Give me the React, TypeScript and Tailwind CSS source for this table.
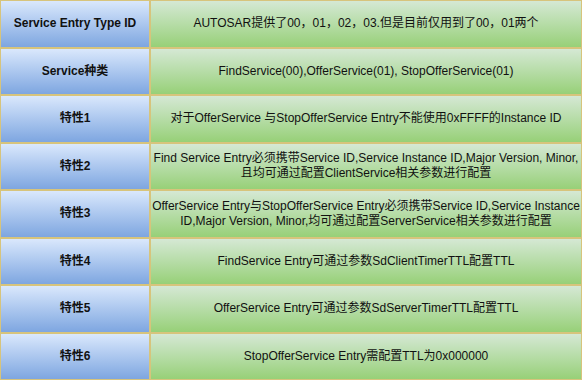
import React from "react";

const rows: { k: string; v: React.ReactNode }[] = [
  { k: "Service Entry Type ID", v: "AUTOSAR提供了00，01，02，03.但是目前仅用到了00，01两个" },
  { k: "Service种类", v: "FindService(00),OfferService(01), StopOfferService(01)" },
  { k: "特性1", v: "对于OfferService 与StopOfferService Entry不能使用0xFFFF的Instance ID" },
  {
    k: "特性2",
    v: (
      <>
        Find Service Entry必须携带Service ID,Service Instance ID,Major Version, Minor,
        <br />
        且均可通过配置ClientService相关参数进行配置
      </>
    ),
  },
  {
    k: "特性3",
    v: (
      <>
        OfferService Entry与StopOfferService Entry必须携带Service ID,Service Instance
        <br />
        ID,Major Version, Minor,均可通过配置ServerService相关参数进行配置
      </>
    ),
  },
  { k: "特性4", v: "FindService Entry可通过参数SdClientTimerTTL配置TTL" },
  { k: "特性5", v: "OfferService Entry可通过参数SdServerTimerTTL配置TTL" },
  { k: "特性6", v: "StopOfferService Entry需配置TTL为0x000000" },
];

export default function App() {
  return (
    <div
      className="w-[582px] h-[380px] grid grid-cols-[150px_432px] grid-rows-8 text-[12px] text-[#111] leading-[15px] bg-white"
      style={{ fontFamily: '"Liberation Sans", Arial, "Noto Sans CJK SC", sans-serif' }}
    >
      {rows.map((r, i) => (
        <React.Fragment key={i}>
          <div className="flex items-center justify-center border border-[#d7c47c] bg-gradient-to-b from-[#dae8fc] to-[#7ea6e0] font-bold whitespace-nowrap">
            {r.k}
          </div>
          <div className="flex items-center justify-center text-center border border-[#d7c47c] bg-gradient-to-b from-[#d5e8d4] to-[#97d077] whitespace-nowrap">
            <div>{r.v}</div>
          </div>
        </React.Fragment>
      ))}
    </div>
  );
}
